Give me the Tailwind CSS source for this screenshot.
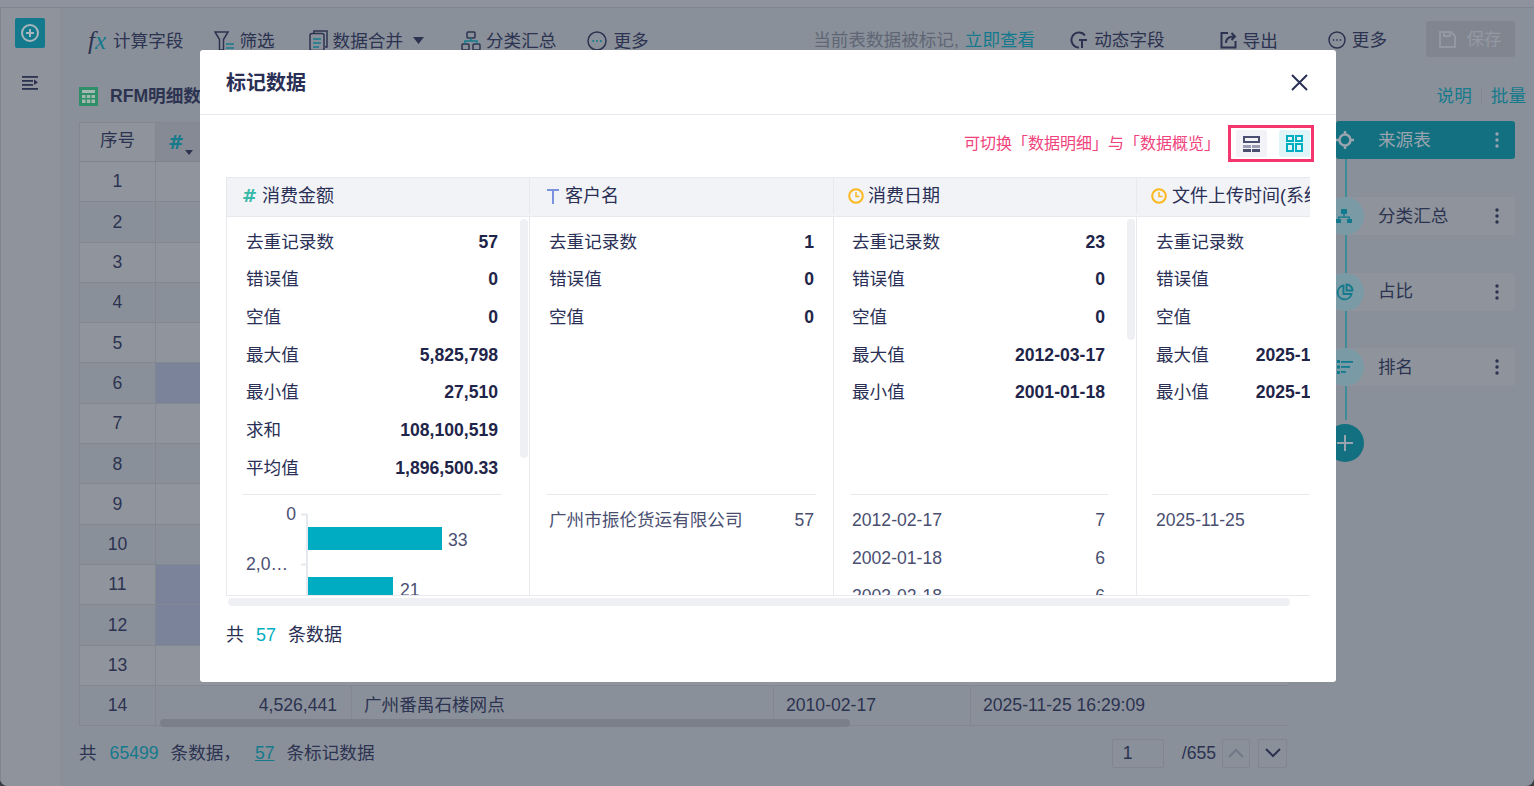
<!DOCTYPE html>
<html lang="en">
<head>
  <meta charset="UTF-8">
  <title>标记数据</title>
  <script src="https://cdn.jsdelivr.net/npm/@tailwindcss/browser@4"></script>
</head>
<body class="bg-[#3a3d45] overflow-hidden">
<div class="relative w-[1534px] h-[786px] overflow-hidden font-['Liberation_Sans','Noto_Sans_CJK_SC',sans-serif] text-[17.6px] text-[#2c3350]">

  <!-- dimmed page behind the dialog -->
  <div class="h-full flex flex-col bg-[#8a909a] rounded-b-lg overflow-hidden">
    <div class="h-[8px] shrink-0 bg-[#8d929c] border-b border-[#7f848e]"></div>
    <div class="flex flex-1 min-h-0">

      <!-- left rail -->
      <div class="w-[60px] shrink-0 bg-[#8f939c] border-l border-[#7f848e] pr-[1px] flex flex-col items-center pt-[10px]">
        <div class="w-[30px] h-[30px] rounded-[2px] bg-[#127a8c] flex items-center justify-center">
          <svg width="20" height="20" viewBox="0 0 20 20" fill="none" stroke="#a9b6bd" stroke-width="2"><circle cx="10" cy="10" r="8"/><path d="M10 6v8M6 10h8"/></svg>
        </div>
        <svg class="mt-[27px]" width="18" height="16" viewBox="0 0 18 16" fill="#2c3350"><rect x="1" y="1" width="16" height="1.8"/><rect x="1" y="5" width="11" height="1.8"/><rect x="1" y="9" width="11" height="1.8"/><rect x="1" y="13" width="16" height="1.8"/><path d="M13 4.500l4 2.700-4 2.700z"/></svg>
      </div>

      <div class="flex-1 min-w-0 flex flex-col">
        <!-- toolbar -->
        <div class="h-[62px] shrink-0 flex items-center pl-[28px] pr-[19px]">
          <div class="flex items-center pt-[4px]">
            <span class="w-[25px] font-['Liberation_Serif',serif] italic text-[25px] leading-none"><span>f</span><span class="text-[#157a8c]">x</span></span>
            <span>计算字段</span>
            <svg class="ml-[31px] mr-[4px]" width="21" height="22" viewBox="0 0 21 22" fill="none" stroke="#2c3350" stroke-width="1.5"><path d="M1 2h13L9.500 9.500V20H5.500V9.500z"/><path d="M12 14h8M12 18h8" stroke="#157a8c"/></svg>
            <span>筛选</span>
            <svg class="ml-[34px] mr-[5px]" width="19" height="22" viewBox="0 0 19 22" fill="none" stroke="#2c3350" stroke-width="1.5"><path d="M5 3V1h13v16h-2"/><rect x="1" y="3.500" width="14" height="17" rx="2"/><path d="M4 9h8M4 13h8M4 17h6" stroke="#157a8c"/></svg>
            <span>数据合并</span>
            <svg class="ml-[10px]" width="11" height="7" viewBox="0 0 11 7" fill="#2c3350"><path d="M0 0h11L5.500 7z"/></svg>
            <svg class="ml-[37px] mr-[5px]" width="20" height="20" viewBox="0 0 20 20" fill="none" stroke="#2c3350" stroke-width="1.5"><rect x="6" y="1" width="8" height="6" rx="1"/><rect x="1" y="13" width="7" height="6" rx="1"/><rect x="12" y="13" width="7" height="6" rx="1"/><path d="M4 13v-3h12v3M10 7v3" stroke="#157a8c"/></svg>
            <span>分类汇总</span>
            <svg class="ml-[31px] mr-[6px]" width="20" height="20" viewBox="0 0 20 20" fill="none"><circle cx="10" cy="10" r="9" stroke="#2c3350" stroke-width="1.500"/><path d="M5.500 10h1.500M9.300 10h1.500M13 10h1.500" stroke="#157a8c" stroke-width="1.800"/></svg>
            <span>更多</span>
          </div>
          <div class="ml-auto flex items-center pt-[2px]">
            <span class="text-[#5f6675]">当前表数据被标记,</span>
            <span class="ml-[6px] text-[#127a8c]">立即查看</span>
            <svg class="ml-[35px] mr-[6px]" width="18" height="18" viewBox="0 0 18 18" fill="none" stroke="#2c3350" stroke-width="2"><path d="M15 4.500A7.500 7.500 0 1 0 9 16.500"/><path d="M9 9h8M12 9v8"/></svg>
            <span>动态字段</span>
            <svg class="ml-[55px] mr-[6px]" width="17" height="18" viewBox="0 0 17 18" fill="none" stroke="#2c3350" stroke-width="2"><path d="M8 2H1.500v14.500H15.500V10"/><path d="M6 12c0-4 3-6.500 8-6.500M11.500 2l3.500 3.500L11.500 9"/></svg>
            <span class="pt-[3px]">导出</span>
            <svg class="ml-[50px] mr-[6px]" width="18" height="18" viewBox="0 0 18 18" fill="none"><circle cx="9" cy="9" r="8" stroke="#2c3350" stroke-width="1.500"/><path d="M4.800 9h1.500M8.200 9h1.500M11.700 9h1.500" stroke="#2c3350" stroke-width="1.600"/></svg>
            <span>更多</span>
            <div class="ml-[39px] w-[89px] h-[36px] -mt-[2px] rounded-[3px] bg-[#80858f] flex items-center justify-center gap-[10px] text-[#9498a2]">
              <svg width="17" height="17" viewBox="0 0 17 17" fill="none" stroke="#9498a2" stroke-width="2"><path d="M1 1h11l4 4v11H1z"/><path d="M5 1v4h6V1"/></svg>
              <span>保存</span>
            </div>
          </div>
        </div>

        <div class="flex flex-1 min-h-0">
          <!-- table area -->
          <div class="w-[1247px] shrink-0 pl-[19px] pr-[19px] flex flex-col">
            <div class="h-[52px] shrink-0 flex items-center gap-[12px] pt-[1px]">
              <svg width="19" height="19" viewBox="0 0 19 19"><rect width="19" height="19" fill="#2e8f68"/><rect x="3" y="3" width="13" height="3" fill="#a3b8b0"/><path d="M3 8h3.500v3H3zM7.800 8h3.500v3H7.800zM12.500 8H16v3h-3.500zM3 12.500h3.500V16H3zM7.800 12.500h3.500V16H7.800zM12.500 12.500H16V16h-3.500z" fill="#a3b8b0"/></svg>
              <span class="font-bold">RFM明细数据</span>
            </div>

            <div class="relative w-[1209px] border-t border-l border-[#83878f] text-[#2c3350]">
              <div class="grid grid-cols-[76px_196px_422px_197px_318px] h-[39px] border-b border-[#7f848e] bg-[#8f939c]">
                <div class="flex items-center justify-center pb-[4px] border-r border-[#83878f]">序号</div>
                <div class="relative flex items-center pl-[12px] bg-[#858a94] font-['DejaVu_Sans'] font-bold text-[19px] text-[#157a8c]">#<span class="absolute left-[29px] top-[27px] w-0 h-0 border-x-[4px] border-x-transparent border-t-[5px] border-t-[#2c3350]"></span></div>
                <div class="bg-[#858a94]"></div><div class="bg-[#858a94]"></div><div class="bg-[#858a94]"></div>
              </div>
              <div class="grid grid-cols-[76px_1fr] h-[40.3px] border-b border-[#83878f] bg-[#90949d]"><div class="flex items-center justify-center border-r border-[#83878f]">1</div><div></div></div>
              <div class="grid grid-cols-[76px_1fr] h-[40.3px] border-b border-[#83878f] bg-[#8a909a]"><div class="flex items-center justify-center border-r border-[#83878f]">2</div><div></div></div>
              <div class="grid grid-cols-[76px_1fr] h-[40.3px] border-b border-[#83878f] bg-[#90949d]"><div class="flex items-center justify-center border-r border-[#83878f]">3</div><div></div></div>
              <div class="grid grid-cols-[76px_1fr] h-[40.3px] border-b border-[#83878f] bg-[#8a909a]"><div class="flex items-center justify-center border-r border-[#83878f]">4</div><div></div></div>
              <div class="grid grid-cols-[76px_1fr] h-[40.3px] border-b border-[#83878f] bg-[#90949d]"><div class="flex items-center justify-center border-r border-[#83878f]">5</div><div></div></div>
              <div class="grid grid-cols-[76px_1fr] h-[40.3px] border-b border-[#83878f] bg-[#8a909a]"><div class="flex items-center justify-center border-r border-[#83878f]">6</div><div class="bg-[#7a8399]"></div></div>
              <div class="grid grid-cols-[76px_1fr] h-[40.3px] border-b border-[#83878f] bg-[#90949d]"><div class="flex items-center justify-center border-r border-[#83878f]">7</div><div></div></div>
              <div class="grid grid-cols-[76px_1fr] h-[40.3px] border-b border-[#83878f] bg-[#8a909a]"><div class="flex items-center justify-center border-r border-[#83878f]">8</div><div></div></div>
              <div class="grid grid-cols-[76px_1fr] h-[40.3px] border-b border-[#83878f] bg-[#90949d]"><div class="flex items-center justify-center border-r border-[#83878f]">9</div><div></div></div>
              <div class="grid grid-cols-[76px_1fr] h-[40.3px] border-b border-[#83878f] bg-[#8a909a]"><div class="flex items-center justify-center border-r border-[#83878f]">10</div><div></div></div>
              <div class="grid grid-cols-[76px_1fr] h-[40.3px] border-b border-[#83878f] bg-[#90949d]"><div class="flex items-center justify-center border-r border-[#83878f]">11</div><div class="bg-[#7a8399]"></div></div>
              <div class="grid grid-cols-[76px_1fr] h-[40.3px] border-b border-[#83878f] bg-[#8a909a]"><div class="flex items-center justify-center border-r border-[#83878f]">12</div><div class="bg-[#7a8399]"></div></div>
              <div class="grid grid-cols-[76px_1fr] h-[40.3px] border-b border-[#83878f] bg-[#90949d]"><div class="flex items-center justify-center border-r border-[#83878f]">13</div><div></div></div>
              <div class="grid grid-cols-[76px_196px_422px_197px_318px] h-[40.3px] border-b border-[#83878f] bg-[#8a909a]">
                <div class="flex items-center justify-center border-r border-[#83878f]">14</div>
                <div class="flex items-center justify-end pr-[14px] border-r border-[#83878f]">4,526,441</div>
                <div class="flex items-center pl-[12px] border-r border-[#83878f]">广州番禺石楼网点</div>
                <div class="flex items-center pl-[12px] border-r border-[#83878f]">2010-02-17</div>
                <div class="flex items-center pl-[12px]">2025-11-25 16:29:09</div>
              </div>
              <!-- horizontal scrollbar over the last row -->
              <div class="absolute left-[80px] bottom-[-1px] w-[690px] h-[8px] rounded-full bg-[#7a7f8a]"></div>
            </div>

            <div class="flex items-center h-[52px] mt-[1px]">
              <span>共</span>
              <span class="ml-[13px] text-[#157a8c]">65499</span>
              <span class="ml-[12px]">条数据，</span>
              <span class="ml-[14px] text-[#157a8c] underline">57</span>
              <span class="ml-[12px]">条标记数据</span>
              <div class="ml-auto mr-[1px] flex items-center">
                <div class="w-[52px] h-[29px] rounded-[2px] border border-[#80858f] pl-[10px] flex items-center">1</div>
                <span class="ml-[18px]">/655</span>
                <div class="ml-[6px] w-[28px] h-[29px] rounded-[2px] border border-[#80858f] flex items-center justify-center">
                  <svg width="16" height="10" viewBox="0 0 16 10" fill="none" stroke="#737887" stroke-width="2"><path d="M1 9l7-7 7 7"/></svg>
                </div>
                <div class="ml-[8px] w-[29px] h-[29px] rounded-[2px] border border-[#80858f] flex items-center justify-center">
                  <svg width="16" height="10" viewBox="0 0 16 10" fill="none" stroke="#2c3350" stroke-width="2"><path d="M1 1l7 7 7-7"/></svg>
                </div>
              </div>
            </div>
          </div>

          <!-- right step panel -->
          <div class="relative flex-1 pl-[29px] pr-[19px]">
            <div class="h-[51px] pt-[2px] flex items-center justify-end text-[#157a8c] -mr-[11px]">
              <span>说明</span>
              <span class="mx-[9px] w-px h-[16px] bg-[#80858f]"></span>
              <span>批量</span>
            </div>
            <!-- connector line -->
            <div class="absolute left-[38px] top-[80px] w-[2px] h-[270px] bg-[#3f8c99]"></div>
            <div class="relative flex flex-col gap-[37.75px]">
              <div class="relative h-[38px] rounded-[3px] bg-[#127080] text-[#9aa4ae] flex items-center pl-[42px] pr-[16px] justify-between">
                <span>来源表</span>
                <svg width="4" height="16" viewBox="0 0 4 16" fill="#9aa4ae"><circle cx="2" cy="2" r="1.700"/><circle cx="2" cy="8" r="1.700"/><circle cx="2" cy="14" r="1.700"/></svg>
                <svg class="absolute left-0 top-[10px]" width="18" height="18" viewBox="0 0 18 18" fill="none" stroke="#9aa4ae" stroke-width="2.500"><circle cx="9" cy="9" r="5.500"/><path d="M9 0v3M9 15v3M0 9h3M15 9h3"/></svg>
              </div>
              <div class="relative h-[38px] rounded-[3px] bg-[#8f939c] flex items-center pl-[42px] pr-[16px] justify-between">
                <div class="absolute left-[-10px] top-0 w-[38px] h-[38px] rounded-full bg-[#7a9aa6] flex items-center justify-center">
                  <svg class="ml-[-2px]" width="18" height="16" viewBox="0 0 18 16" fill="#127a8c"><rect x="6" y="1" width="6" height="5"/><rect x="1" y="11" width="5" height="4"/><rect x="12" y="11" width="5" height="4"/><path d="M8.300 6h1.400v2.500H15V11h-1.400V9.800H4.400V11H3V8.500h5.300z"/></svg>
                </div>
                <span class="relative">分类汇总</span>
                <svg width="4" height="16" viewBox="0 0 4 16" fill="#2c3350"><circle cx="2" cy="2" r="1.700"/><circle cx="2" cy="8" r="1.700"/><circle cx="2" cy="14" r="1.700"/></svg>
              </div>
              <div class="relative h-[38px] rounded-[3px] bg-[#8f939c] flex items-center pl-[42px] pr-[16px] justify-between">
                <div class="absolute left-[-10px] top-0 w-[38px] h-[38px] rounded-full bg-[#7a9aa6] flex items-center justify-center">
                  <svg width="18" height="18" viewBox="0 0 18 18" fill="none" stroke="#127a8c" stroke-width="1.800"><path d="M7.500 2.500a7 7 0 1 0 8 8.500H7.500z"/><path d="M10.500 1.500a6 6 0 0 1 6 6h-6z"/></svg>
                </div>
                <span class="relative">占比</span>
                <svg width="4" height="16" viewBox="0 0 4 16" fill="#2c3350"><circle cx="2" cy="2" r="1.700"/><circle cx="2" cy="8" r="1.700"/><circle cx="2" cy="14" r="1.700"/></svg>
              </div>
              <div class="relative h-[38px] rounded-[3px] bg-[#8f939c] flex items-center pl-[42px] pr-[16px] justify-between">
                <div class="absolute left-[-10px] top-0 w-[38px] h-[38px] rounded-full bg-[#7a9aa6] flex items-center justify-center">
                  <svg width="18" height="16" viewBox="0 0 18 16" fill="#127a8c"><rect x="5" y="2" width="12" height="1.800"/><rect x="5" y="7" width="9" height="1.800"/><rect x="5" y="12" width="5" height="1.800"/><rect x="1" y="1" width="3" height="3"/><rect x="1" y="6.500" width="3" height="3"/><rect x="1" y="12" width="3" height="3"/></svg>
                </div>
                <span class="relative">排名</span>
                <svg width="4" height="16" viewBox="0 0 4 16" fill="#2c3350"><circle cx="2" cy="2" r="1.700"/><circle cx="2" cy="8" r="1.700"/><circle cx="2" cy="14" r="1.700"/></svg>
              </div>
              <div class="relative h-[38px]">
                <div class="absolute left-[-10px] top-0 w-[38px] h-[38px] rounded-full bg-[#127080] flex items-center justify-center">
                  <svg width="16" height="16" viewBox="0 0 16 16" stroke="#9aa4ae" stroke-width="2"><path d="M8 0v16M0 8h16"/></svg>
                </div>
              </div>
            </div>
          </div>
        </div>
      </div>
    </div>
  </div>

  <!-- dialog -->
  <div class="absolute left-[200px] top-[50px] w-[1136px] h-[632px] rounded-[3px] bg-white flex flex-col text-[#2a2f55]">
    <div class="h-[65px] shrink-0 border-b border-[#e6e7f0] flex items-center justify-between pl-[26px] pr-[28px]">
      <span class="text-[20px] font-bold pt-[1px]">标记数据</span>
      <svg width="17" height="17" viewBox="0 0 17 17" fill="none" stroke="#2a2f55" stroke-width="2"><path d="M1 1l15 15M16 1L1 16"/></svg>
    </div>

    <div class="h-[62px] shrink-0 flex items-center justify-end pr-[22px] pb-[5px]">
      <span class="text-[16px] text-[#f0427c] mr-[8px]">可切换「数据明细」与「数据概览」</span>
      <div class="w-[86px] h-[37px] border-[3px] border-[#f5356e] flex items-center justify-between pl-[5px] pr-[1px]">
        <div class="w-[31px] h-[27px] rounded-[2px] bg-[#f3f3f7] flex items-center justify-center">
          <svg width="17" height="16" viewBox="0 0 17 16"><path d="M0 0h17v7H0zM2 2v3h13V2z" fill="#4a4f72" fill-rule="evenodd"/><rect y="9" width="8" height="3" fill="#9a9db3"/><rect x="9" y="9" width="8" height="3" fill="#9a9db3"/><rect y="13" width="8" height="3" fill="#4a4f72"/><rect x="9" y="13" width="8" height="3" fill="#4a4f72"/></svg>
        </div>
        <div class="w-[31px] h-[27px] rounded-[2px] bg-[#e0f5f7] flex items-center justify-center">
          <svg width="17" height="17" viewBox="0 0 17 17" fill="none" stroke="#00aec2" stroke-width="2"><rect x="1" y="1" width="6" height="5"/><rect x="10" y="1" width="6" height="5"/><rect x="1" y="9" width="6" height="7"/><rect x="10" y="9" width="6" height="7"/></svg>
        </div>
      </div>
    </div>

    <div class="ml-[26px] w-[1084px] h-[419px] overflow-hidden border-l border-b border-t border-[#e8e9ef]">
      <div class="grid grid-cols-[302px_304px_303px_304px] w-[1213px] h-[39px] pb-[2px] bg-[#f2f3f7] border-b border-[#e8e9ef] text-[18px]">
        <div class="flex items-center gap-[5px] pl-[15px]"><span class="font-['DejaVu_Sans'] font-bold text-[18px] leading-none text-[#38b8a8]">#</span><span>消费金额</span></div>
        <div class="flex items-center gap-[5px] pl-[16px] border-l border-[#e8e9ef]"><svg width="14" height="16" viewBox="0 0 14 16" fill="#7b93de"><path d="M1 1h12v2H8v13H6V3H1z"/></svg><span>客户名</span></div>
        <div class="flex items-center gap-[4px] pl-[14px] border-l border-[#e8e9ef]"><svg width="16" height="16" viewBox="0 0 16 16" fill="none" stroke="#fbb81e" stroke-width="2"><circle cx="8" cy="8" r="6.800"/><path d="M8 4v4.500h3.500" stroke-width="1.500"/></svg><span>消费日期</span></div>
        <div class="flex items-center gap-[5px] pl-[14px] border-l border-[#e8e9ef] whitespace-nowrap"><svg width="16" height="16" viewBox="0 0 16 16" fill="none" stroke="#fbb81e" stroke-width="2"><circle cx="8" cy="8" r="6.800"/><path d="M8 4v4.500h3.500" stroke-width="1.500"/></svg><span>文件上传时间(系统)</span></div>
      </div>

      <div class="grid grid-cols-[302px_304px_303px_304px] w-[1213px] h-[378px]">
        <!-- col 1 -->
        <div class="relative overflow-hidden">
          <div class="absolute left-[293px] top-[2px] w-[8px] h-[239px] rounded-full bg-[#eef0f3]"></div>
          <div class="h-[278px] ml-[15px] w-[260px] pt-[6px] border-b border-[#e8e9ef]">
            <div class="h-[37.7px] flex items-center justify-between px-[4px]"><span>去重记录数</span><b class="text-[#1f2549]">57</b></div>
            <div class="h-[37.7px] flex items-center justify-between px-[4px]"><span>错误值</span><b class="text-[#1f2549]">0</b></div>
            <div class="h-[37.7px] flex items-center justify-between px-[4px]"><span>空值</span><b class="text-[#1f2549]">0</b></div>
            <div class="h-[37.7px] flex items-center justify-between px-[4px]"><span>最大值</span><b class="text-[#1f2549]">5,825,798</b></div>
            <div class="h-[37.7px] flex items-center justify-between px-[4px]"><span>最小值</span><b class="text-[#1f2549]">27,510</b></div>
            <div class="h-[37.7px] flex items-center justify-between px-[4px]"><span>求和</span><b class="text-[#1f2549]">108,100,519</b></div>
            <div class="h-[37.7px] flex items-center justify-between px-[4px]"><span>平均值</span><b class="text-[#1f2549]">1,896,500.33</b></div>
          </div>
          <svg class="block -mt-[1px]" width="302" height="101" viewBox="0 0 302 101" font-family="Liberation Sans" font-size="17.6" fill="#4a4f72">
            <path d="M80 20v81M74 20.500h6M74 70.500h6" stroke="#e6e8f0" stroke-width="2" fill="none"/>
            <text x="69" y="26" text-anchor="end">0</text>
            <text x="19" y="76">2,0…</text>
            <rect x="81" y="33" width="134" height="23" fill="#00acc1"/>
            <text x="221" y="52">33</text>
            <rect x="81" y="83" width="85" height="18" fill="#00acc1"/>
            <text x="173" y="102">21</text>
          </svg>
        </div>
        <!-- col 2 -->
        <div class="border-l border-[#e8e9ef] overflow-hidden">
          <div class="h-[278px] ml-[16px] w-[270px] pt-[6px] border-b border-[#e8e9ef]">
            <div class="h-[37.7px] flex items-center justify-between pl-[3px] pr-[2px]"><span>去重记录数</span><b class="text-[#1f2549]">1</b></div>
            <div class="h-[37.7px] flex items-center justify-between pl-[3px] pr-[2px]"><span>错误值</span><b class="text-[#1f2549]">0</b></div>
            <div class="h-[37.7px] flex items-center justify-between pl-[3px] pr-[2px]"><span>空值</span><b class="text-[#1f2549]">0</b></div>
          </div>
          <div class="ml-[16px] w-[270px] pt-[6px] pl-[3px] pr-[2px] text-[#4a4f72]">
            <div class="h-[38px] flex items-center justify-between"><span>广州市振伦货运有限公司</span><span>57</span></div>
          </div>
        </div>
        <!-- col 3 -->
        <div class="relative border-l border-[#e8e9ef] overflow-hidden">
          <div class="absolute left-[293px] top-[2px] w-[8px] h-[121px] rounded-full bg-[#eef0f3]"></div>
          <div class="h-[278px] ml-[16px] w-[258px] pt-[6px] border-b border-[#e8e9ef]">
            <div class="h-[37.7px] flex items-center justify-between pl-[2px] pr-[3px]"><span>去重记录数</span><b class="text-[#1f2549]">23</b></div>
            <div class="h-[37.7px] flex items-center justify-between pl-[2px] pr-[3px]"><span>错误值</span><b class="text-[#1f2549]">0</b></div>
            <div class="h-[37.7px] flex items-center justify-between pl-[2px] pr-[3px]"><span>空值</span><b class="text-[#1f2549]">0</b></div>
            <div class="h-[37.7px] flex items-center justify-between pl-[2px] pr-[3px]"><span>最大值</span><b class="text-[#1f2549]">2012-03-17</b></div>
            <div class="h-[37.7px] flex items-center justify-between pl-[2px] pr-[3px]"><span>最小值</span><b class="text-[#1f2549]">2001-01-18</b></div>
          </div>
          <div class="ml-[16px] w-[258px] pt-[6px] pl-[2px] pr-[3px] text-[#4a4f72]">
            <div class="h-[38px] flex items-center justify-between"><span>2012-02-17</span><span>7</span></div>
            <div class="h-[38px] flex items-center justify-between"><span>2002-01-18</span><span>6</span></div>
            <div class="h-[38px] flex items-center justify-between"><span>2003-02-18</span><span>6</span></div>
          </div>
        </div>
        <!-- col 4, cut off by the table's right edge -->
        <div class="border-l border-[#e8e9ef] overflow-hidden">
          <div class="h-[278px] ml-[15px] w-[268px] pt-[6px] border-b border-[#e8e9ef]">
            <div class="h-[37.7px] flex items-center justify-between pl-[4px]"><span>去重记录数</span><b class="text-[#1f2549]">1</b></div>
            <div class="h-[37.7px] flex items-center justify-between pl-[4px]"><span>错误值</span><b class="text-[#1f2549]">0</b></div>
            <div class="h-[37.7px] flex items-center justify-between pl-[4px]"><span>空值</span><b class="text-[#1f2549]">0</b></div>
            <div class="h-[37.7px] flex items-center justify-between pl-[4px]"><span>最大值</span><b class="text-[#1f2549] whitespace-nowrap">2025-11-25 16:29:09</b></div>
            <div class="h-[37.7px] flex items-center justify-between pl-[4px]"><span>最小值</span><b class="text-[#1f2549] whitespace-nowrap">2025-11-25 16:29:09</b></div>
          </div>
          <div class="ml-[15px] w-[268px] pt-[6px] pl-[4px] text-[#4a4f72]">
            <div class="h-[38px] flex items-center justify-between"><span>2025-11-25</span><span>57</span></div>
          </div>
        </div>
      </div>
    </div>

    <div class="ml-[28px] mt-[2px] w-[1062px] h-[8px] shrink-0 rounded-full bg-[#eef0f3]"></div>
    <div class="ml-[26px] mt-[17px] flex items-center h-[24px] text-[18px]">
      <span>共</span>
      <span class="ml-[12px] text-[#00aec2]">57</span>
      <span class="ml-[12px]">条数据</span>
    </div>
  </div>
</div>
</body>
</html>
